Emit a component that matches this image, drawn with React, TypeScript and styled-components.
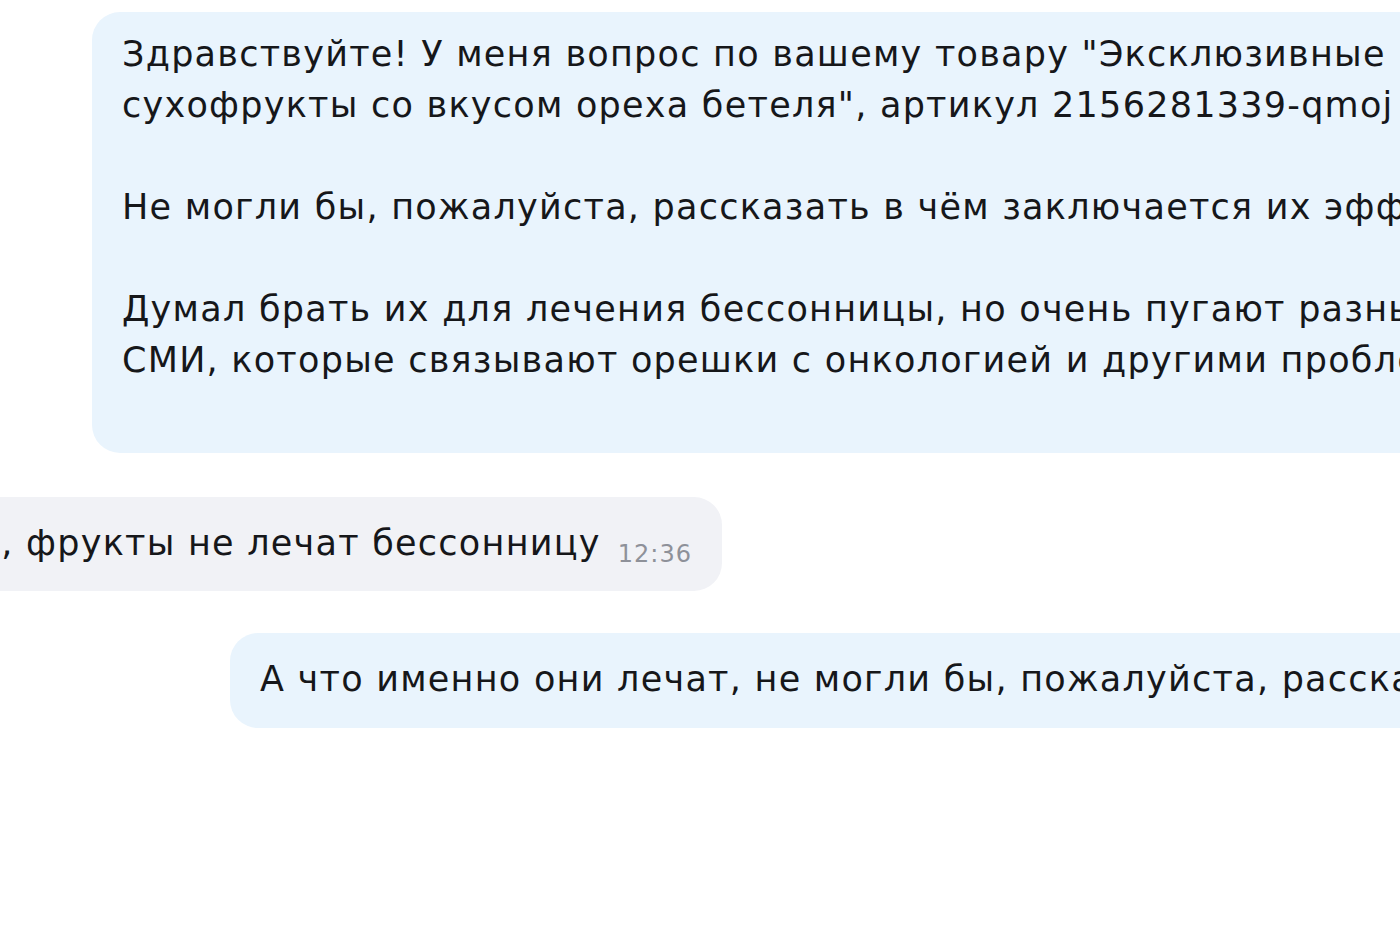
import React from "react";
import styled, { createGlobalStyle } from "styled-components";

const Global = createGlobalStyle`
  html, body {
    margin: 0;
    padding: 0;
    background: #ffffff;
    overflow: hidden;
  }
  body {
    font-family: "DejaVu Sans", "Noto Sans", sans-serif;
    color: #16171a;
  }
`;

const Page = styled.div`
  width: 1400px;
  height: 934px;
  overflow: hidden;
  display: flex;
  flex-direction: column;
  padding-top: 12px;
  box-sizing: border-box;
`;

const Row = styled.div<{ $side: "in" | "out"; $indent: number; $gap: number }>`
  display: flex;
  justify-content: ${(p) => (p.$side === "in" ? "flex-end" : "flex-start")};
  width: ${(p) => (p.$side === "in" ? `${p.$indent}px` : "auto")};
  padding-left: ${(p) => (p.$side === "out" ? `${p.$indent}px` : "0")};
  margin-top: ${(p) => p.$gap}px;
  flex-shrink: 0;
`;

const Bubble = styled.div<{ $side: "in" | "out"; $padTop: number; $padBottom: number }>`
  flex-shrink: 0;
  background: ${(p) => (p.$side === "out" ? "#e9f4fd" : "#f1f2f6")};
  border-radius: 28px;
  padding: ${(p) => p.$padTop}px 30px ${(p) => p.$padBottom}px 30px;
  white-space: nowrap;
  font-size: 35px;
  letter-spacing: 1.25px;
  line-height: 51px;
  display: flex;
  align-items: baseline;
  gap: 17px;
`;

const Text = styled.div`
  white-space: pre;
`;

const Time = styled.span`
  font-size: 24px;
  line-height: 1;
  letter-spacing: 1px;
  color: #8e9199;
  transform: translateY(7px);
`;

const first = `Здравствуйте! У меня вопрос по вашему товару "Эксклюзивные
сухофрукты со вкусом ореха бетеля", артикул 2156281339-qmoj

Не могли бы, пожалуйста, рассказать в чём заключается их эффект?

Думал брать их для лечения бессонницы, но очень пугают разные
СМИ, которые связывают орешки с онкологией и другими проблемами`;

export default function App() {
  return (
    <>
      <Global />
      <Page>
        <Row $side="out" $indent={92} $gap={0}>
          <Bubble $side="out" $padTop={17} $padBottom={67}>
            <Text>{first}</Text>
          </Bubble>
        </Row>
        <Row $side="in" $indent={722} $gap={44}>
          <Bubble $side="in" $padTop={21} $padBottom={22}>
            <Text>Нет, фрукты не лечат бессонницу</Text>
            <Time>12:36</Time>
          </Bubble>
        </Row>
        <Row $side="out" $indent={230} $gap={42}>
          <Bubble $side="out" $padTop={21} $padBottom={23}>
            <Text>А что именно они лечат, не могли бы, пожалуйста, рассказать?</Text>
          </Bubble>
        </Row>
      </Page>
    </>
  );
}
